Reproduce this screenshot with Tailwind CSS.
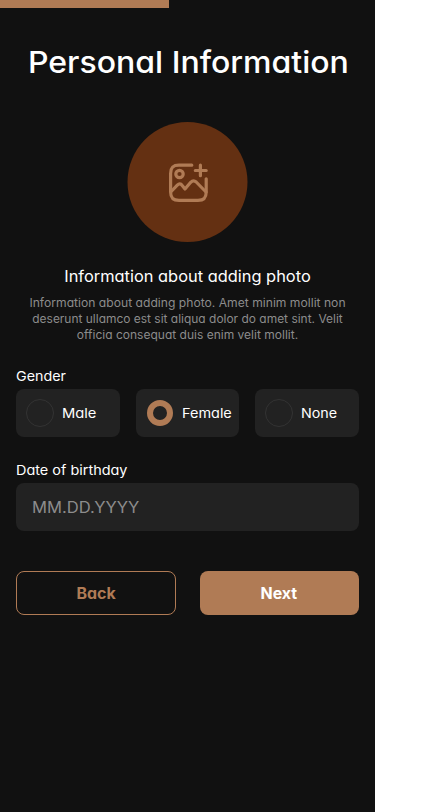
<!DOCTYPE html>
<html lang="en">
<head>
<meta charset="utf-8">
<title>Personal Information</title>
<script src="https://cdn.jsdelivr.net/npm/@tailwindcss/browser@4"></script>
</head>
<body class="bg-white font-['Inter',sans-serif] [font-feature-settings:'cv11','ss03']">
<main class="w-[375px] h-[812px] bg-[#111111] text-white flex flex-col overflow-hidden">
  <div class="h-2 w-[169px] shrink-0 bg-[#b07b55]"></div>
  <h1 class="mt-[34px] h-10 leading-10 text-center text-[30px] font-medium whitespace-nowrap pl-px"><span class="inline-block scale-x-[1.067]">Personal Information</span></h1>
  <svg class="mt-10 ml-[127px] w-[121px] h-[120px] shrink-0 text-[#b07b55]" viewBox="127 122 121 120" fill="none" stroke="currentColor" stroke-width="3.200" stroke-linecap="round" stroke-linejoin="round">
    <circle cx="187.500" cy="182" r="60" fill="#643012" stroke="none"/>
    <path d="M191.800 165.200H179C173 165.200 170.600 167.500 170.600 173.500V192C170.600 198 173 200.400 179 200.400H198C204 200.400 206.200 198 206.200 192V178.800"/>
    <circle cx="179.500" cy="174" r="3.700"/>
    <path d="M200.400 165.200V175.700M195.300 170.500H206.200"/>
    <path d="M171.200 191.500L177.300 185.200Q180 182.500 182.200 185.500L185 189L190.700 182.300Q193.400 179.500 196.200 182L206 192"/>
  </svg>
  <h2 class="mt-6 h-[22px] leading-[22px] text-center text-[15.5px] whitespace-nowrap"><span class="inline-block scale-x-[1.058]">Information about adding photo</span></h2>
  <p class="mt-[7px] text-center text-[11.5px] leading-4 text-[#8c8c8c] whitespace-nowrap"><span class="block scale-x-[1.055]">Information about adding photo. Amet minim mollit non</span><span class="block scale-x-[1.04]">deserunt ullamco est sit aliqua dolor do amet sint. Velit</span><span class="block scale-x-[1.045]">officia consequat duis enim velit mollit.</span></p>
  <form class="px-4 mt-6 flex flex-col">
    <div class="h-[22px] leading-[19px] text-[13.5px]"><span class="inline-block origin-left scale-x-[1.06]">Gender</span></div>
    <div class="grid grid-cols-3 gap-4">
      <label class="h-12 rounded-lg bg-[#222222] flex items-center pl-[10px] gap-2 text-[13.5px]"><span class="size-7 rounded-full border border-[#333333]"></span><span class="origin-left scale-x-[1.09]">Male</span></label>
      <label class="h-12 rounded-lg bg-[#222222] flex items-center pl-[11px] gap-[9px] text-[13.5px]"><span class="size-[26px] rounded-full border-[6px] border-[#b07b55] bg-[#222222]"></span><span class="origin-left scale-x-[1.07]">Female</span></label>
      <label class="h-12 rounded-lg bg-[#222222] flex items-center pl-[10px] gap-2 text-[13.5px]"><span class="size-7 rounded-full border border-[#333333]"></span><span class="origin-left scale-x-[1.06]">None</span></label>
    </div>
    <div class="mt-6 h-[22px] leading-[19px] text-[13.5px]"><span class="inline-block origin-left scale-x-[1.07]">Date of birthday</span></div>
    <div class="h-12 rounded-lg bg-[#222222] flex items-center pl-4 pt-0.5 text-[15.5px] text-[#8c8c8c]"><span class="origin-left scale-x-[1.072]">MM.DD.YYYY</span></div>
    <div class="mt-10 grid grid-cols-2 gap-6">
      <button type="button" class="h-11 pt-0.5 rounded-lg border border-[#b07b55] text-[#b07b55] text-[15.5px] font-bold"><span class="inline-block scale-x-[1.03]">Back</span></button>
      <button type="button" class="h-11 pt-0.5 rounded-lg bg-[#b07b55] text-white text-[15.5px] font-bold"><span class="inline-block scale-x-[1.03]">Next</span></button>
    </div>
  </form>
</main>
</body>
</html>
